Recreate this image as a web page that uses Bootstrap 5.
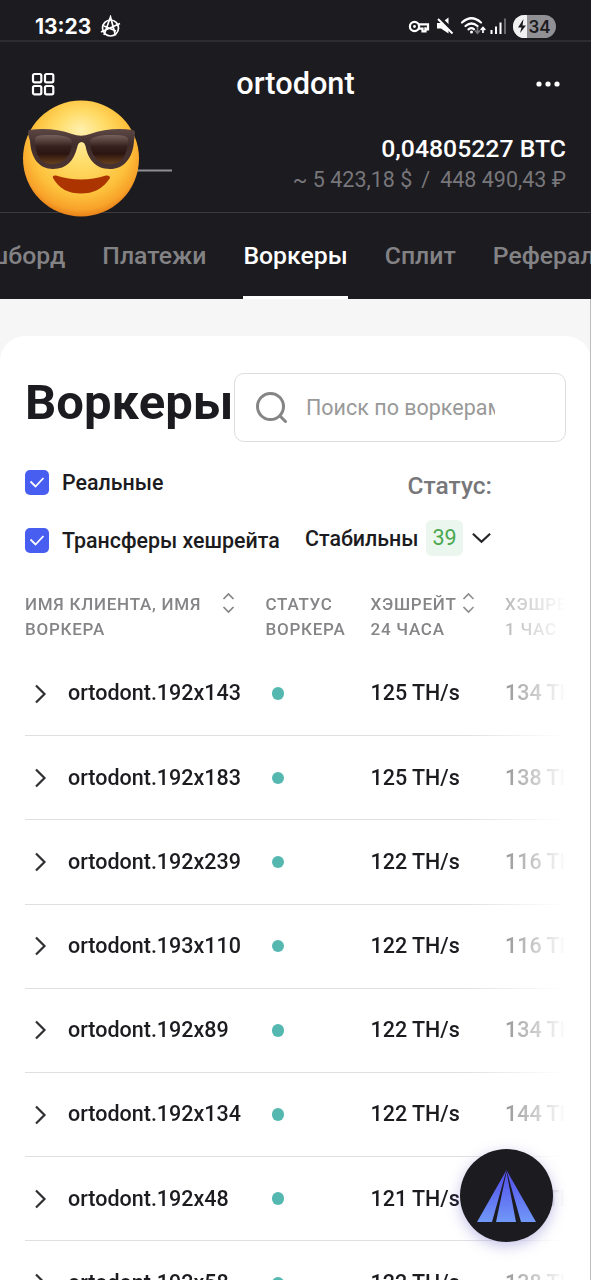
<!DOCTYPE html>
<html lang="ru">
<head>
<meta charset="utf-8">
<meta name="viewport" content="width=device-width, initial-scale=1">
<title>Воркеры</title>
<link href="https://cdn.jsdelivr.net/npm/bootstrap@5.3.0/dist/css/bootstrap.min.css" rel="stylesheet">
<style>
html, body { height: 1280px; overflow: hidden; }
body { font-family: Roboto, "Liberation Sans", sans-serif; background: #f6f6f6; color: #1c1b20; font-weight: 500; white-space: nowrap; }
.screen { height: 1280px; overflow: hidden; }
.top-area { background: #1c1b20; }
.statusbar { height: 42px; border-bottom: 2px solid #2d2c31; padding: 12px 35px 0; font-family: Inter, sans-serif; }
.clock { font-size: 21px; line-height: 29px; font-weight: 650; width: 56px; }
.status-icons { width: 148px; height: 26px; }
.account { height: 171px; border-bottom: 1px solid #3c3b40; }
.title-row { height: 84px; padding: 0 31px; }
.title-name { font-size: 30.7px; line-height: 36px; font-weight: 550; }
.balance { padding: 8px 25px 0; text-align: right; }
.btc { font-size: 24.8px; line-height: 30px; color: #fff; }
.fiat { font-size: 21.5px; line-height: 32px; font-weight: 400; color: #77767a; }
.tabs { height: 86px; overflow: hidden; gap: 37px; margin-left: -44px; }
.tabs a { font-size: 24.8px; line-height: 86px; color: #838285; text-decoration: none; flex: none; }
.tabs a.on { color: #fff; box-shadow: inset 0 -3px #fff; }
.emoji { left: 22px; top: 57px; }
.sheet { background: #fff; margin-top: 37px; height: 960px; border-radius: 25px 25px 0 0; padding: 37px 25px 0; }
.sheet h1 { font-size: 49px; line-height: 60px; font-weight: 700; width: 209px; margin: 0; padding-bottom: 9px; }
.search { width: 332px; height: 69px; border: 1px solid #dedede; border-radius: 10px; padding-left: 20px; }
.search input { width: 189px; margin-left: 17px; border: 0; outline: 0; padding: 1px 0 0; background: none; font-size: 21.5px; }
.search input::placeholder { color: #999; opacity: 1; }
.filters { height: 140px; }
.filter-label { font-size: 21.4px; line-height: 24px; padding-top: 2px; }
.tick { width: 24px; height: 25px; border-radius: 5px; background: #485ef0; }
.status-label { font-size: 24.5px; line-height: 30px; color: #77777a; }
.count { width: 37px; height: 36px; border-radius: 6px; background: #ebf6ef; color: #4ba850; font-size: 21.5px; font-weight: 400; }
.workers { -webkit-mask-image: linear-gradient(90deg, #000 435px, transparent 541px); mask-image: linear-gradient(90deg, #000 435px, transparent 541px); overflow: hidden; height: 720px; }
.wrow, .whead { display: grid; grid-template-columns: 240.5px 105px 134.5px 160px; width: 640px; }
.whead { height: 70px; padding-top: 10px; font-size: 17px; line-height: 24.5px; letter-spacing: .75px; color: #858588; }
.wrow { height: 84.2px; border-bottom: 1px solid #dfdfe1; font-size: 21.5px; align-items: center; }
.later { color: #4a4a4d; }
.worker-name { margin-left: 20px; }
.dot { width: 12.500px; height: 12.500px; border-radius: 50%; background: #54b8b1; margin-left: 6px; }
.fab { right: 38px; top: 1149px; width: 93px; height: 93px; border-radius: 50%; background: #1c1b20; box-shadow: 0 4px 14px rgba(90,80,190,.35); }
.edge { right: 0; top: 299px; width: 1px; height: 981px; background: #bdbdbf; }
</style>
</head>
<body>
<div class="screen position-relative">
  <header class="top-area">
    <div class="statusbar d-flex text-white">
      <span class="clock">13:23</span>
      <svg class="ms-2" style="margin-top:3px" width="23" height="24" viewBox="0 0 23 24" fill="none" stroke="#fff" stroke-width="1.700"><circle cx="11.500" cy="13" r="8"/><path d="M5 20 11.500 2l5 18.500M2 17 21 8.500M5 11l12 5"/></svg>
      <svg class="status-icons ms-auto" viewBox="408 13 148 26" style="margin-top:1px">
        <g fill="none" stroke="#fff" stroke-width="2.200"><circle cx="414.500" cy="26.500" r="4.600"/><path d="M419 24.300h9v5h-2.600v-2M419 28.600h3.500v2.800h3v-4"/></g><circle cx="414.500" cy="26.500" r="1.400" fill="#fff"/>
        <path d="M437 23h4l7.500-5.500v16l-7.500-5h-4z" fill="#fff"/><path d="M439 17.500 454 32.500" stroke="#1c1b20" stroke-width="4"/><path d="M438 19 452.500 33.500" stroke="#fff" stroke-width="2"/>
        <g fill="none" stroke="#fff" stroke-width="2.200" stroke-linecap="round"><path d="M462 22.500q9.500-8.500 19 0M465.500 26q6-5 12 0M468.500 29.300q3-2.200 5.500 0"/></g><circle cx="471.500" cy="32" r="1.500" fill="#fff"/>
        <path d="M477.500 27v6m-2.500-2.500 2.500 2.700 2.500-2.700" fill="none" stroke="#77767a" stroke-width="1.700"/><path d="M483 33v-5m-2.300 2 2.300-2.500 2.300 2.500" fill="none" stroke="#fff" stroke-width="1.700"/>
        <path d="M491.500 30v4M496 26.500v7.500M500.500 22.500v11.500" stroke="#fff" stroke-width="2"/><path d="M505 18.500v15.500" stroke="#69686c" stroke-width="2"/>
        <rect x="513" y="15" width="43" height="23" rx="11.500" fill="#919094"/><path d="M527 15h-2.500a11.500 11.500 0 0 0 0 23h2.500z" fill="#f1f1f2"/><path d="m523.500 19-5.500 8.500h3.500L520 33l6-7.500h-3.500z" fill="#1c1b20"/>
        <text x="528.500" y="32.500" font-size="17" font-weight="600" fill="#1c1b20">34</text>
      </svg>
    </div>
    <div class="account position-relative">
      <div class="title-row d-flex align-items-center justify-content-between text-white">
        <svg width="24" height="24" viewBox="0 0 24 24" fill="none" stroke="#fff" stroke-width="2.200"><rect x="2" y="2" width="8.300" height="8.300" rx="1.500"/><rect x="14" y="2" width="8.300" height="8.300" rx="1.500"/><rect x="2" y="14" width="8.300" height="8.300" rx="1.500"/><rect x="14" y="14" width="8.300" height="8.300" rx="1.500"/></svg>
        <span class="title-name">ortodont</span>
        <svg width="24" height="6" viewBox="0 0 24 6" fill="#fff"><circle cx="3" cy="3" r="2.600"/><circle cx="12" cy="3" r="2.600"/><circle cx="21" cy="3" r="2.600"/></svg>
      </div>
      <div class="balance">
        <div class="btc">0,04805227 BTC</div>
        <div class="fiat">~ 5 423,18 $<span style="margin:0 10px 0 9px">/</span>448 490,43 ₽</div>
      </div>
      <svg class="emoji position-absolute" width="152" height="120" viewBox="22 99 152 120">
        <defs>
          <radialGradient id="face" cx=".5" cy=".43" r=".57" fx=".5" fy=".25"><stop offset="0" stop-color="#fff0ae"/><stop offset=".4" stop-color="#ffdc68"/><stop offset=".75" stop-color="#fdc13c"/><stop offset=".92" stop-color="#f8a22a"/><stop offset="1" stop-color="#e98218"/></radialGradient>
          <linearGradient id="lens" x2="0" y2="1"><stop offset="0" stop-color="#76625d"/><stop offset=".4" stop-color="#35201d"/><stop offset=".65" stop-color="#2c1511"/><stop offset="1" stop-color="#68401b"/></linearGradient>
          <linearGradient id="rim" x2="0" y2="1"><stop offset="0" stop-color="#5c4744"/><stop offset=".4" stop-color="#402d2b"/><stop offset="1" stop-color="#4b3431"/></linearGradient>
        </defs>
        <path d="M136 170.500h36" stroke="#8e8d91" stroke-width="2"/>
        <circle cx="81" cy="158.500" r="58" fill="url(#face)"/>
        <path d="M29 130Q52 127 72 134q9 3.500 18 0Q110 127 133 130q2.500 1 2 4l-1 7c-1 18-11 28-24 28-15 0-22-11-24-21q-1-6-4.500-6t-4.500 6c-3 12-10 21-24 21-14 0-22-11-23-28l-2-7q0-3 1-4z" fill="url(#rim)"/>
        <path d="M35 139c0-4 8-4 17-4 11 0 20 2 20 7 0 13-8 22-20 22-11 0-17-8-17-25zM90 142c0-5 9-7 19-7 9 0 19 0 19 4 0 17-7 25-18 25-12 0-20-10-20-22z" fill="url(#lens)"/>
        <path d="M53 178q-1-3 3-2.500 25 8 50 0 4-.5 4 2.500c-7 11-17 15.500-29 15.500S59 189 53 178z" fill="#ac3400"/>
      </svg>
    </div>
    <nav class="tabs d-flex">
      <a href="#">Дашборд</a><a href="#">Платежи</a><a href="#" class="on">Воркеры</a><a href="#">Сплит</a><a href="#">Рефералы</a>
    </nav>
  </header>
  <main class="sheet">
    <div class="d-flex align-items-center">
      <h1>Воркеры</h1>
      <div class="search d-flex align-items-center flex-shrink-0">
        <svg width="34" height="34" viewBox="0 0 34 34" fill="none" stroke="#858585" stroke-width="3"><circle cx="15.500" cy="15.500" r="13"/><path d="m25 25 5.500 5.500" stroke-linecap="round"/></svg>
        <input type="text" placeholder="Поиск по воркерам">
      </div>
    </div>
    <div class="filters d-flex">
      <div class="d-flex flex-column" style="width:280px;padding-top:27px;gap:32px">
        <div class="d-flex align-items-center"><span class="tick d-flex"><svg class="m-auto" width="16" height="12" viewBox="0 0 16 12" fill="none" stroke="#fff" stroke-width="1.800"><path d="m1.500 5.500 5 5 8-8.500"/></svg></span><span class="filter-label" style="margin-left:13px">Реальные</span></div>
        <div class="d-flex align-items-center"><span class="tick d-flex"><svg class="m-auto" width="16" height="12" viewBox="0 0 16 12" fill="none" stroke="#fff" stroke-width="1.800"><path d="m1.500 5.500 5 5 8-8.500"/></svg></span><span class="filter-label" style="margin-left:13px">Трансферы хешрейта</span></div>
      </div>
      <div style="padding-top:29px;width:187px">
        <div class="status-label text-end">Статус:</div>
        <div class="d-flex align-items-center" style="margin-top:19px">
          <span class="filter-label flex-grow-1">Стабильны</span>
          <span class="count d-flex align-items-center justify-content-center">39</span>
          <svg style="margin-left:8px" width="21" height="14" viewBox="0 0 22 14" fill="none" stroke="#252528" stroke-width="2.300"><path d="m2 2.500 9 8.500 9-8.500"/></svg>
        </div>
      </div>
    </div>
    <div class="workers" id="workers">
      <div class="whead">
        <div class="d-flex"><span style="width:197px">ИМЯ КЛИЕНТА, ИМЯ<br>ВОРКЕРА</span><svg width="13" height="22" viewBox="0 0 13 22" fill="none" stroke="#858588" stroke-width="1.700"><path d="m1.500 7 5-5 5 5M1.500 15l5 5 5-5"/></svg></div>
        <div>СТАТУС<br>ВОРКЕРА</div>
        <div class="d-flex"><span style="width:91px">ХЭШРЕЙТ<br>24 ЧАСА</span><svg width="13" height="22" viewBox="0 0 13 22" fill="none" stroke="#858588" stroke-width="1.700"><path d="m1.500 7 5-5 5 5M1.500 15l5 5 5-5"/></svg></div>
        <div>ХЭШРЕЙТ<br>1 ЧАС</div>
      </div>
    </div>
  </main>
  <a href="#" class="fab position-absolute d-flex">
    <svg class="m-auto" width="60" height="52" viewBox="0 0 60 52"><defs><linearGradient id="logo" x2="0" y2="52" gradientUnits="userSpaceOnUse"><stop offset="0" stop-color="#504bea"/><stop offset="1" stop-color="#7199f8"/></linearGradient></defs><path d="M29.500 0 0 52h15zM29.500 2 19 52h20zM29.500 0l14.500 52h15z" fill="url(#logo)"/></svg>
  </a>
  <div class="edge position-absolute"></div>
</div>
<script src="https://cdn.jsdelivr.net/npm/bootstrap@5.3.0/dist/js/bootstrap.bundle.min.js"></script>
<script>
const rows = [['192x143',125,134],['192x183',125,138],['192x239',122,116],['193x110',122,116],['192x89',122,134],['192x134',122,144],['192x48',121,130],['192x58',122,138]];
document.getElementById('workers').insertAdjacentHTML('beforeend', rows.map(([n, day, hour]) => `
  <div class="wrow">
    <div class="d-flex align-items-center"><svg style="margin-left:9px" width="14" height="20" viewBox="0 0 14 20" fill="none" stroke="#303034" stroke-width="2.200"><path d="m2 1.500 8.500 8.500L2 18.500"/></svg><span class="worker-name">ortodont.${n}</span></div>
    <div class="dot"></div><div>${day} TH/s</div><div class="later">${hour} TH/s</div>
  </div>`).join(''));
</script>
</body>
</html>
